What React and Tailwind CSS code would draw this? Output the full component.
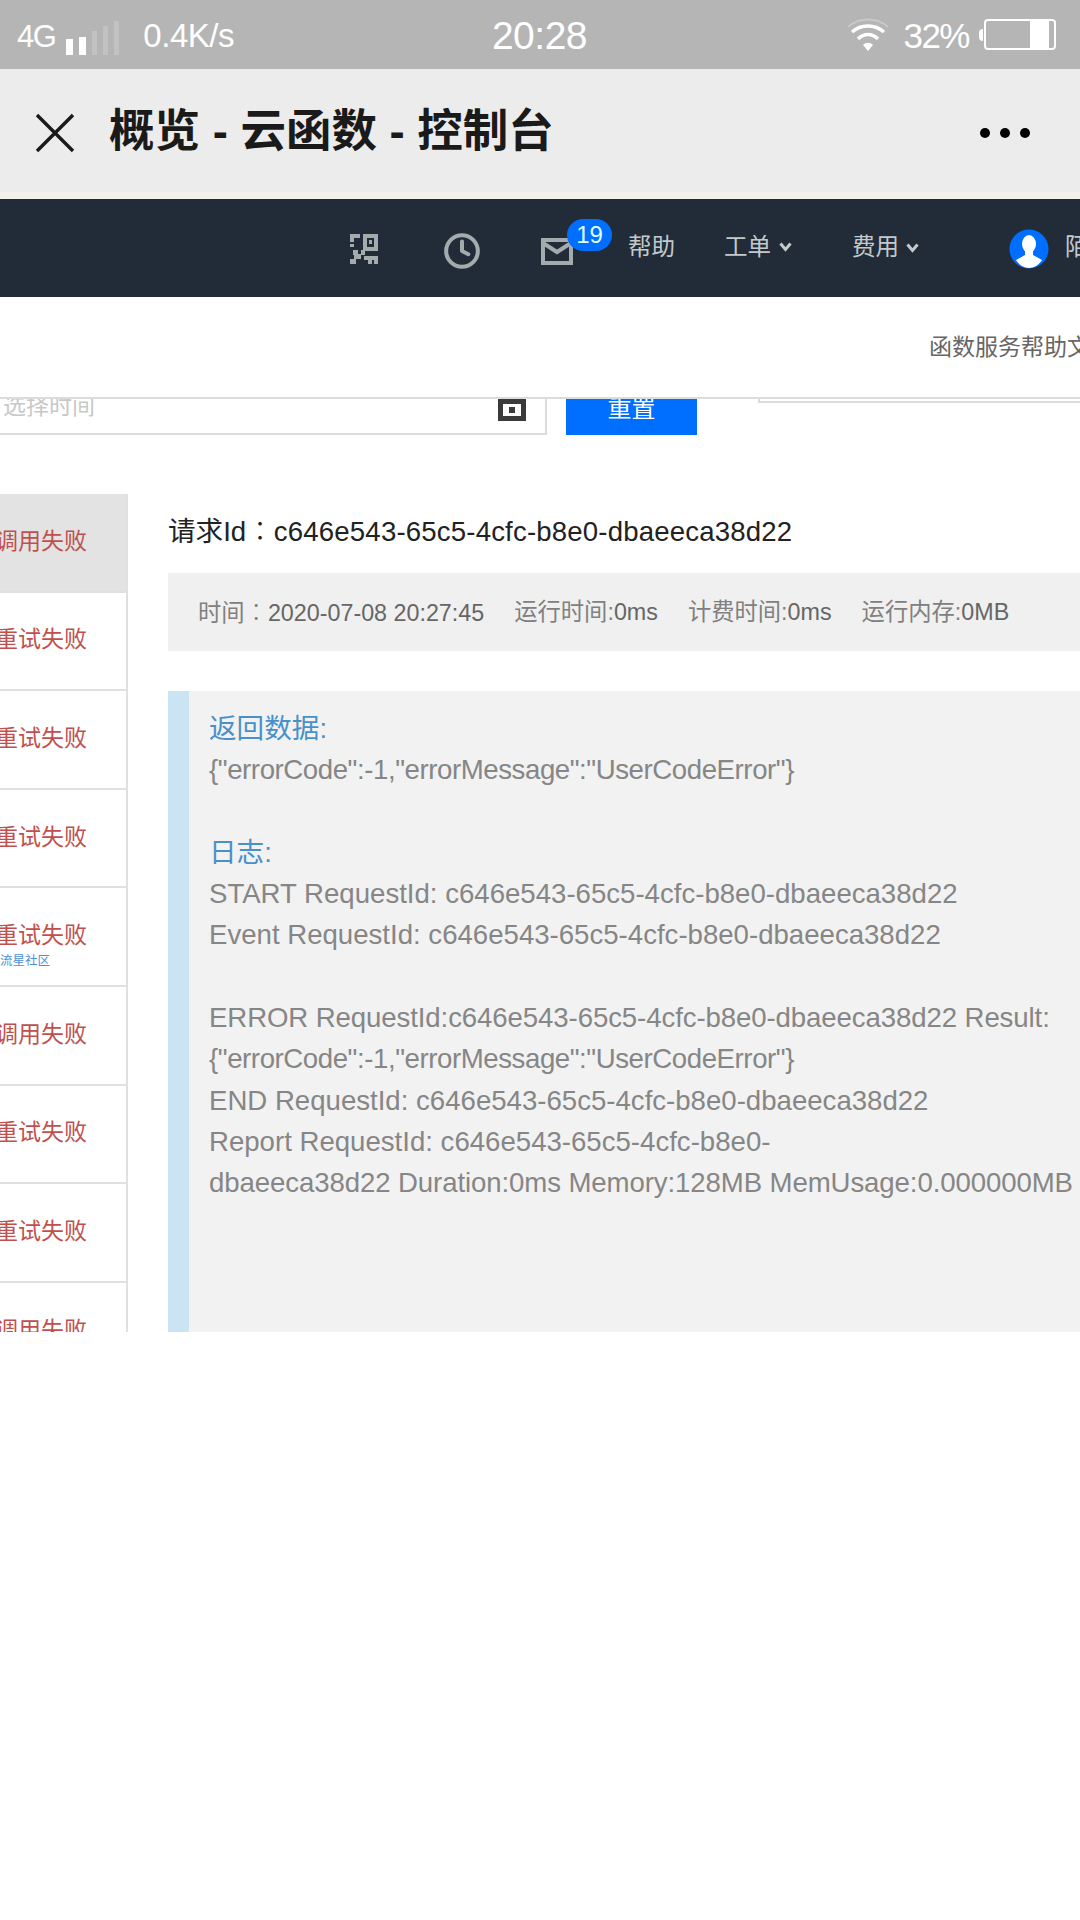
import React from 'react';
import { Clock } from 'lucide-react';

const failures = ['调用失败', '重试失败', '重试失败', '重试失败', '重试失败', '调用失败', '重试失败', '重试失败', '调用失败'];

const QrIcon = () => (
  <svg width="28" height="30" viewBox="0 0 28 30" fill="#a3abac">
    <path d="M0 0h10v4H4v4H0zM0 10h4v3H0zM13 0h15v17H13zM17 4v9h7V4z" />
    <path d="M19 6h3v4h-3zM3 16h5v4h3v-4h4v5h-4v4H6v5H0v-5h4v-4H3zM14 22h14v8h-4v-4h-2v4h-4v-4h-4z" />
  </svg>
);

const MailIcon = () => (
  <svg width="32" height="27" viewBox="0 0 32 27" fill="none">
    <rect x="2" y="2" width="28" height="23" stroke="#a3abac" strokeWidth="4" />
    <path d="M2 5l14 9 14-9" stroke="#a3abac" strokeWidth="4" />
  </svg>
);

const CloseIcon = () => (
  <svg width="40" height="40" viewBox="0 0 40 40" fill="none">
    <path d="M2 2l36 36M38 2L2 38" stroke="#1a1a1a" strokeWidth="3.4" />
  </svg>
);

const Chevron = () => (
  <svg width="13" height="10" viewBox="0 0 13 10" fill="none">
    <path d="M1.5 1.5L6.5 7.5l5-6" stroke="#c4c9cc" strokeWidth="3" />
  </svg>
);

const WifiIcon = () => (
  <svg width="44" height="34" viewBox="0 0 44 34" fill="none">
    <path d="M2 9C13 -1 31 -1 42 9" stroke="#c9c9c9" strokeWidth="2" />
    <path d="M6 14C15 6 29 6 38 14" stroke="#fff" strokeWidth="3.4" />
    <path d="M12 21C18 15 26 15 32 21" stroke="#fff" strokeWidth="3.4" />
    <path d="M17 27C20 24 24 24 27 27L22 33z" fill="#fff" />
  </svg>
);

const Avatar = () => (
  <svg width="40" height="42" viewBox="0 0 40 42">
    <circle cx="20" cy="21" r="19.5" fill="#006eff" />
    <ellipse cx="20" cy="16" rx="7" ry="9" fill="#fff" />
    <path d="M16 23h8v4l9 5c-3 5-8 8-13 8s-10-3-13-8l9-5z" fill="#fff" />
  </svg>
);

const App = () => {
  return (
    <div className="w-[1080px] h-[1920px] overflow-hidden bg-white font-['Liberation_Sans','Noto_Sans_CJK_SC',sans-serif]">
      <div className="h-[69px] bg-[#b5b5b5] flex items-center text-white">
        <span className="ml-[17px] mt-[5px] text-[31px] tracking-[-1.5px]">4G</span>
        <div className="ml-[11px] mt-[7px] flex items-end gap-[6px] h-[34px]">
          <div className="w-[7px] h-[16px] bg-white" />
          <div className="w-[7px] h-[18px] bg-white" />
          <div className="w-[5px] h-[24px] bg-[#c2c2c2]" />
          <div className="w-[5px] h-[29px] bg-[#c2c2c2]" />
          <div className="w-[5px] h-[34px] bg-[#c2c2c2]" />
        </div>
        <span className="ml-[24px] mt-[2px] text-[33px] tracking-[-0.5px]">0.4K/s</span>
        <span className="ml-[258px] mt-[3px] text-[39px] tracking-[-0.5px]">20:28</span>
        <div className="ml-auto mr-[24px] flex items-center">
          <WifiIcon />
          <span className="ml-[13px] mt-[3px] text-[35px] tracking-[-1.5px]">32%</span>
          <div className="ml-[10px] w-[4px] h-[12px] bg-white rounded-l-full" />
          <div className="ml-[1px] w-[72px] h-[31px] border-[2px] border-white rounded-[4px] flex justify-end">
            <div className="w-[19px] bg-white mr-[5px]" />
          </div>
        </div>
      </div>

      <div className="h-[123px] bg-[#ececec] flex items-center pt-[4px]">
        <div className="ml-[35px]"><CloseIcon /></div>
        <h1 className="ml-[34px] text-[45.5px] font-bold text-[#1a1a1a] whitespace-nowrap">概览 - 云函数 - 控制台</h1>
        <div className="ml-auto mr-[50px] flex gap-[10px]">
          <div className="w-[10px] h-[10px] rounded-full bg-black" />
          <div className="w-[10px] h-[10px] rounded-full bg-black" />
          <div className="w-[10px] h-[10px] rounded-full bg-black" />
        </div>
      </div>
      <div className="h-[7px] bg-[#f0f0ec]" />

      <nav className="h-[98px] bg-[#222c39] flex items-center text-[23.5px] text-[#c4c9cc] whitespace-nowrap [&>*]:shrink-0">
        <div className="ml-[350px] mt-[2px]"><QrIcon /></div>
        <Clock className="ml-[65px] mt-[6px] text-[#a3abac]" size={38} strokeWidth={4} absoluteStrokeWidth />
        <div className="ml-[60px] mt-[6px] relative">
          <MailIcon />
          <span className="absolute left-[26px] top-[-19px] w-[45px] h-[32px] rounded-full bg-[#006eff] text-[#dff] text-[24px] flex items-center justify-center">19</span>
        </div>
        <span className="ml-[55px]">帮助</span>
        <span className="ml-[49px]">工单</span>
        <div className="ml-[8px] mt-[-3px]"><Chevron /></div>
        <span className="ml-[60px]">费用</span>
        <div className="ml-[7px]"><Chevron /></div>
        <div className="ml-[90px] mt-[2px]"><Avatar /></div>
        <span className="ml-[16px]">陌</span>
      </nav>

      <div className="h-[100px] flex items-center justify-end pt-[1px] text-[23px] text-[#666] whitespace-nowrap overflow-hidden">
        <span className="mr-[-10px]">函数服务帮助文</span>
      </div>

      <div className="h-[38px] border-t-2 border-[#dcdcdc] flex items-start overflow-hidden">
        <div className="w-[547px] h-[38px] mt-[-2px] border-b-2 border-r-2 border-[#dcdcdc] flex justify-between">
          <span className="ml-[3px] mt-[-8px] text-[23px] text-[#c8c8c8] whitespace-nowrap">选择时间</span>
          <div className="mr-[19px] mt-[2px] w-[28px] h-[22px] border-[5px] border-[#3a3a3a] flex items-center justify-center">
            <div className="w-[6px] h-[6px] bg-[#3a3a3a]" />
          </div>
        </div>
        <div className="ml-[19px] w-[131px] h-[38px] mt-[-2px] bg-[#006eff] text-white text-[24px] flex items-center justify-center">
          <span className="mt-[-14px]">重置</span>
        </div>
        <div className="ml-[61px] flex-1 h-[6px] mt-[-2px] border-l-2 border-b-2 border-[#dcdcdc]" />
      </div>

      <div className="mt-[59px] h-[838px] flex items-start overflow-hidden">
        <ul className="w-[128px] shrink-0 h-[838px] border-r-2 border-[#e0e0e0] overflow-hidden">
          {failures.map((label, index) => (
            <li
              key={index}
              className={`relative h-[98.6px] border-b-2 border-[#e0e0e0] flex items-center overflow-hidden pb-[3px] ${index === 0 ? 'bg-[#e3e3e3]' : ''}`}
            >
              <span className="ml-[-5px] text-[23px] leading-[28px] text-[#c0504d] whitespace-nowrap">{label}</span>
              {index === 4 && <span className="absolute left-0 top-[66px] text-[12.5px] leading-[14px] text-[#4a90d9] whitespace-nowrap">流星社区</span>}
            </li>
          ))}
        </ul>

        <section className="ml-[40px] flex-1 min-w-0">
          <h2 className="mt-[16px] h-[38px] text-[27.6px] leading-[38px] text-[#222] whitespace-nowrap">
            请求Id<span className="font-['Noto_Sans_CJK_TC'] font-light">：</span>
            <span className="tracking-[0.17px]">c646e543-65c5-4cfc-b8e0-dbaeeca38d22</span>
          </h2>
          <div className="mt-[25px] h-[78px] bg-[#f0f0f0] pl-[30px] flex items-center gap-[30px] text-[23.3px] text-[#808080] whitespace-nowrap">
            <span>时间<span className="font-['Noto_Sans_CJK_TC'] font-light">：</span><span className="text-[#666]">2020-07-08 20:27:45</span></span>
            <span>运行时间:<span className="text-[#666]">0ms</span></span>
            <span>计费时间:<span className="text-[#666]">0ms</span></span>
            <span>运行内存:<span className="text-[#666]">0MB</span></span>
          </div>
          <div className="mt-[40px] h-[641px] bg-[#f2f2f2] border-l-[21px] border-[#cbe4f3] pl-[20px] pt-[17px] text-[27.6px] leading-[41.3px] text-[#868686] whitespace-nowrap">
            <p className="text-[#4a90c8]">返回数据:</p>
            <p className="tracking-[-0.42px]">{'{"errorCode":-1,"errorMessage":"UserCodeError"}'}</p>
            <p className="h-[41.3px]" />
            <p className="text-[#4a90c8]">日志:</p>
            <p>START RequestId: c646e543-65c5-4cfc-b8e0-dbaeeca38d22</p>
            <p>Event RequestId: c646e543-65c5-4cfc-b8e0-dbaeeca38d22</p>
            <p className="h-[41.3px]" />
            <p className="tracking-[-0.1px]">ERROR RequestId:c646e543-65c5-4cfc-b8e0-dbaeeca38d22 Result:</p>
            <p className="tracking-[-0.42px]">{'{"errorCode":-1,"errorMessage":"UserCodeError"}'}</p>
            <p>END RequestId: c646e543-65c5-4cfc-b8e0-dbaeeca38d22</p>
            <p>Report RequestId: c646e543-65c5-4cfc-b8e0-</p>
            <p className="tracking-[-0.1px]">dbaeeca38d22 Duration:0ms Memory:128MB MemUsage:0.000000MB</p>
          </div>
        </section>
      </div>
    </div>
  );
};

export default App;
